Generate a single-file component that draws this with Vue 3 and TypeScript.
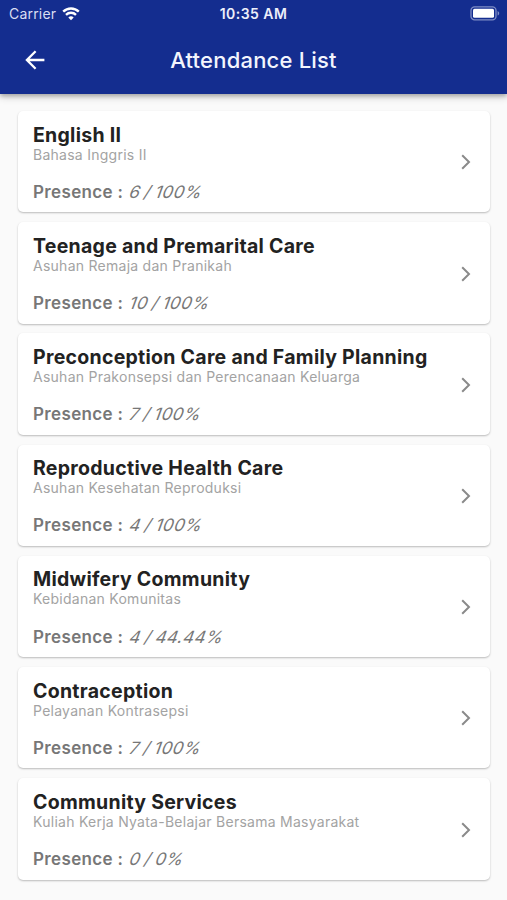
<script setup lang="ts">
interface Course {
  title: string
  subtitle: string
  presence: string
}

const courses: Course[] = [
  { title: 'English II', subtitle: 'Bahasa Inggris II', presence: '6 / 100%' },
  { title: 'Teenage and Premarital Care', subtitle: 'Asuhan Remaja dan Pranikah', presence: '10 / 100%' },
  { title: 'Preconception Care and Family Planning', subtitle: 'Asuhan Prakonsepsi dan Perencanaan Keluarga', presence: '7 / 100%' },
  { title: 'Reproductive Health Care', subtitle: 'Asuhan Kesehatan Reproduksi', presence: '4 / 100%' },
  { title: 'Midwifery Community', subtitle: 'Kebidanan Komunitas', presence: '4 / 44.44%' },
  { title: 'Contraception', subtitle: 'Pelayanan Kontrasepsi', presence: '7 / 100%' },
  { title: 'Community Services', subtitle: 'Kuliah Kerja Nyata-Belajar Bersama Masyarakat', presence: '0 / 0%' },
]
</script>

<template>
  <div class="screen">
    <header class="header">
      <div class="status">
        <div class="carrier">
          <span class="carrier-name">Carrier</span>
          <svg class="wifi" width="18" height="14" viewBox="0 0 18 14">
            <path d="M1.2 4.6a11.2 11.2 0 0 1 15.6 0" />
            <path d="M4 7.8a7.2 7.2 0 0 1 10 0" />
            <path class="wifi-dot" d="M9 13.2 6.3 10.5a3.9 3.9 0 0 1 5.4 0z" />
          </svg>
        </div>
        <span class="clock">10:35 AM</span>
        <svg class="battery" width="30" height="15" viewBox="0 0 30 15">
          <rect class="shell" x="1" y="0.8" width="25" height="13" rx="3.6" />
          <rect class="charge" x="3" y="2.8" width="21" height="9" rx="1.5" />
          <path class="tip" d="M27.6 5v4.6c1-.4 1.6-1.3 1.6-2.3s-.6-1.9-1.6-2.3z" />
        </svg>
      </div>
      <div class="bar">
        <svg class="back" width="22" height="22" viewBox="0 0 22 22">
          <path d="M20.4 11H3.4M11.6 2.3 2.9 11l8.7 8.7" />
        </svg>
        <h1 class="heading">Attendance List</h1>
      </div>
    </header>
    <main class="list">
      <article v-for="course in courses" :key="course.title" class="card">
        <div class="body">
          <h2 class="title">{{ course.title }}</h2>
          <p class="subtitle">{{ course.subtitle }}</p>
          <p class="presence"><b class="label">Presence :</b><i class="value">{{ course.presence }}</i></p>
        </div>
        <svg class="chevron" width="10" height="16" viewBox="0 0 10 16">
          <path d="M1.2 1.2 8 8l-6.8 6.8" />
        </svg>
      </article>
    </main>
  </div>
</template>

<style>
body {
  background: #fafafa;
}
</style>

<style scoped>
.screen {
  box-sizing: border-box;
  height: 900px;
  overflow: hidden;
  background: #fafafa;
  font-family: Inter, "Liberation Sans", sans-serif;
}
.header {
  height: 93.5px;
  background: #142d8f;
  color: #fff;
  box-shadow: 0 2px 4px rgba(0, 0, 0, 0.24), 0 4px 7px rgba(0, 0, 0, 0.14);
}
.status {
  display: grid;
  grid-template-columns: 1fr auto 1fr;
  align-items: center;
  height: 27px;
  padding: 0 7px 0 9px;
}
.carrier {
  display: flex;
  align-items: center;
  gap: 6px;
}
.carrier-name {
  font-size: 14px;
  letter-spacing: 0.2px;
  color: #d9def2;
}
.wifi path {
  fill: none;
  stroke: #fff;
  stroke-width: 2.4;
}
.wifi .wifi-dot {
  fill: #fff;
  stroke: none;
}
.clock {
  margin-left: -2px;
  font-size: 14px;
  font-weight: 600;
  letter-spacing: 0.45px;
  color: #eceffa;
}
.battery {
  justify-self: end;
}
.shell {
  fill: none;
  stroke: #7f8dc5;
  stroke-width: 1.3;
}
.charge {
  fill: #fff;
}
.tip {
  fill: #7f8dc5;
}
.bar {
  display: grid;
  grid-template-columns: 1fr auto 1fr;
  align-items: center;
  height: 66px;
  padding: 0 24px;
}
.back path {
  fill: none;
  stroke: #fff;
  stroke-width: 2.3;
}
.heading {
  margin: 0;
  font-size: 22px;
  font-weight: 500;
  line-height: 28px;
  letter-spacing: 0.2px;
  color: #f3f5fd;
}
.list {
  display: flex;
  flex-direction: column;
  gap: 9.8px;
  padding: 17.5px 17px 0 18px;
}
.card {
  box-sizing: border-box;
  display: flex;
  align-items: center;
  justify-content: space-between;
  height: 101.4px;
  padding: 1.6px 19px 0 15px;
  border-radius: 5px;
  background: #fff;
  box-shadow: 0 1px 2px rgba(0, 0, 0, 0.26);
}
.body {
  align-self: flex-start;
  padding-top: 10px;
  white-space: nowrap;
}
.title {
  margin: 0;
  font-size: 19.5px;
  font-weight: 700;
  line-height: 24px;
  letter-spacing: 0.27px;
  color: #222;
}
.subtitle {
  margin: -1px 0 0;
  font-size: 14px;
  line-height: 17px;
  letter-spacing: 0.26px;
  color: #a3a3a3;
}
.presence {
  display: flex;
  gap: 7px;
  margin: 18.2px 0 0;
  font-size: 17px;
  line-height: 22px;
  color: #777;
}
.label {
  font-weight: 600;
  letter-spacing: 0.35px;
}
.value {
  font-style: normal;
  font-weight: 400;
  word-spacing: -1.2px;
  letter-spacing: 0.45px;
  transform: skewX(-20deg);
}
.chevron path {
  fill: none;
  stroke: #8a8a8a;
  stroke-width: 2;
}
</style>
